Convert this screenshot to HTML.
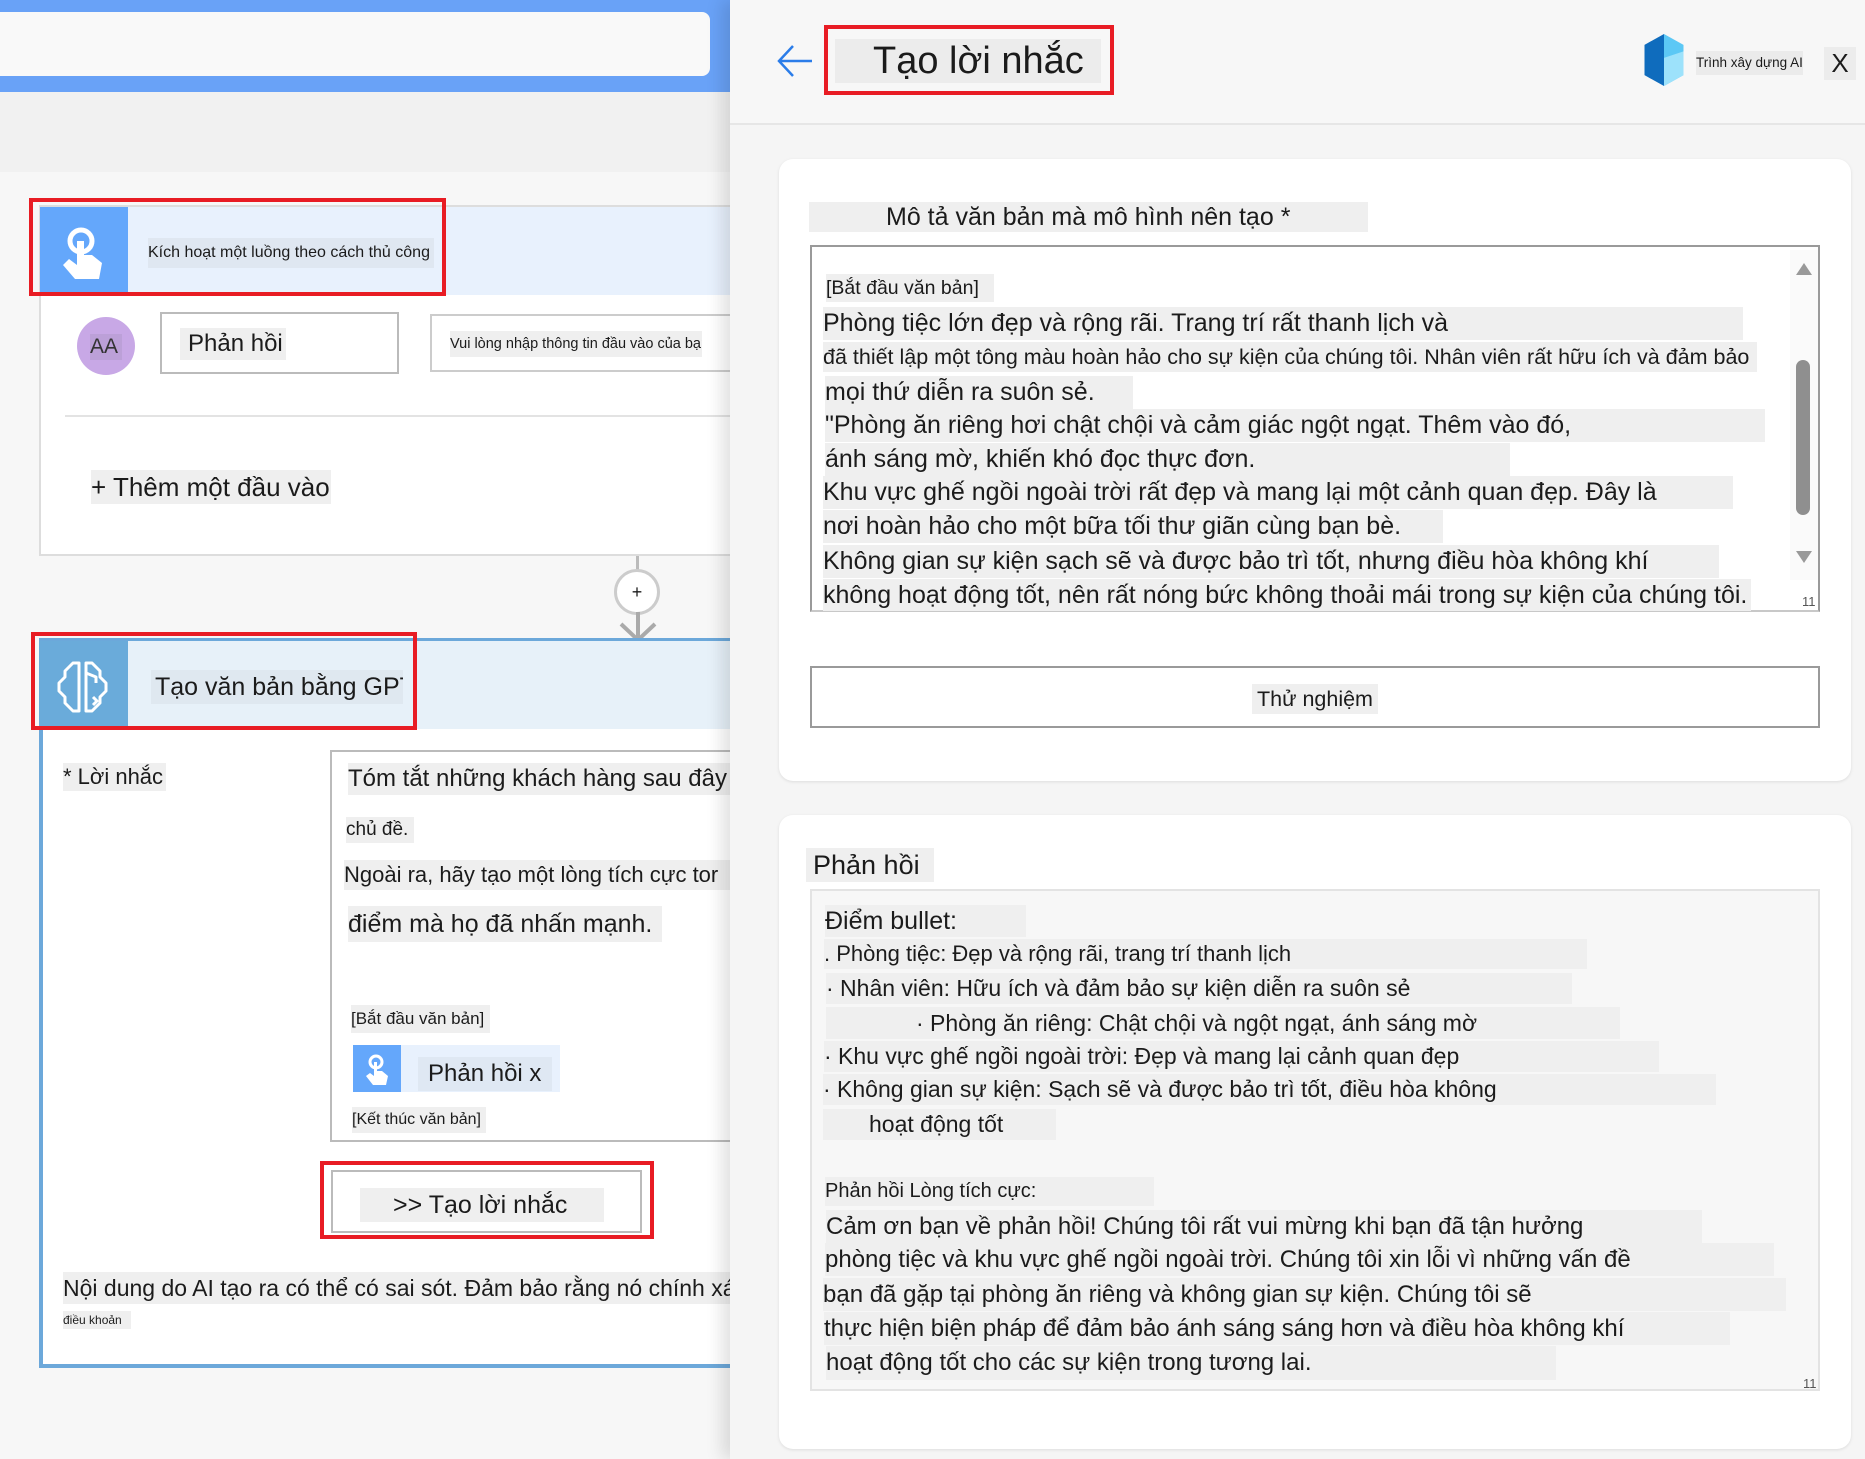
<!DOCTYPE html>
<html><head><meta charset="utf-8">
<style>
*{margin:0;padding:0;box-sizing:border-box}
body{width:1865px;height:1459px;overflow:hidden;background:#f7f7f7;font-family:"Liberation Sans","DejaVu Sans",sans-serif;color:#1b1b1b;position:relative}
.a{position:absolute}
.t{position:absolute;white-space:nowrap;background:#efefef;overflow:hidden}
.rb{position:absolute;border:4px solid #e81c24}
</style></head><body>

<!-- LEFT -->
<div class="a" style="left:0;top:0;width:730px;height:92px;background:#69a2f7"></div>
<div class="a" style="left:0;top:12px;width:710px;height:64px;background:#f9f9f9;border-radius:0 8px 8px 0"></div>
<div class="a" style="left:0;top:92px;width:730px;height:80px;background:#f1f1f1"></div>

<!-- trigger card -->
<div class="a" style="left:39px;top:205px;width:691px;height:351px;background:#fff;border:2px solid #ddd;border-right:none"></div>
<div class="a" style="left:40px;top:207px;width:690px;height:88px;background:#e8f1fd"></div>
<div class="a" style="left:40px;top:207px;width:88px;height:88px;background:#64a7fb">
<svg width="88" height="88" viewBox="0 0 88 88"><circle cx="41" cy="34" r="11" fill="none" stroke="#fff" stroke-width="5"/><path d="M37 34v24l-8-6-6 6 12 14h24l3-16-10-8h-8V34z" fill="#fff"/></svg></div>
<div class="t" style="left:148px;top:238px;width:286px;height:30px;line-height:30px;font-size:16px;background:#dfe7f1">Kích hoạt một luồng theo cách thủ công</div>
<div class="rb" style="left:29px;top:198px;width:417px;height:98px"></div>
<div class="a" style="left:77px;top:317px;width:58px;height:58px;border-radius:50%;background:#c8a8e6"></div>
<div class="t" style="left:90px;top:334px;width:32px;height:26px;line-height:26px;font-size:21px;background:#bca0d8;color:#333">AA</div>
<div class="a" style="left:160px;top:312px;width:239px;height:62px;border:2px solid #bbb;background:#fff"></div>
<div class="t" style="left:180px;top:328px;width:106px;height:32px;line-height:32px;font-size:24px;padding-left:8px">Phản hồi</div>
<div class="a" style="left:430px;top:314px;width:300px;height:58px;border:2px solid #ccc;border-right:none;background:#fff"></div>
<div class="t" style="left:450px;top:331px;width:252px;height:26px;line-height:26px;font-size:14.5px">Vui lòng nhập thông tin đầu vào của bạn</div>
<div class="a" style="left:65px;top:415px;width:665px;height:2px;background:#e3e3e3"></div>
<div class="t" style="left:91px;top:470px;width:240px;height:34px;line-height:34px;font-size:26px">+ Thêm một đầu vào</div>

<!-- connector -->
<div class="a" style="left:636px;top:556px;width:3px;height:14px;background:#bbb"></div>
<div class="a" style="left:614px;top:569px;width:46px;height:46px;border-radius:50%;border:3px solid #ccc;background:#fff;text-align:center;line-height:40px;font-size:18px">+</div>
<svg class="a" style="left:617px;top:612px" width="42" height="30" viewBox="0 0 42 30"><path d="M21 0v26M4 12l17 16 17-16" fill="none" stroke="#aaa" stroke-width="4"/></svg>

<!-- GPT card -->
<div class="a" style="left:39px;top:638px;width:691px;height:730px;background:#fff;border-left:4px solid #6ca8da;border-bottom:4px solid #6ca8da;border-top:3px solid #6ca8da"></div>
<div class="a" style="left:43px;top:641px;width:687px;height:88px;background:#e7f1f9"></div>
<div class="a" style="left:39px;top:641px;width:89px;height:88px;background:#6aabda">
<svg width="89" height="88" viewBox="0 0 89 88"><g fill="none" stroke="#fff" stroke-width="3" stroke-linejoin="round"><path d="M40 22h-6l-8 8v6l-6 6v8l6 6v6l8 8h6z"/><path d="M47 22h6l8 8v6l6 6v8l-6 6v6l-8 8h-6z"/><path d="M47 32l10 4v6"/><path d="M54 56l4 4-4 4"/></g></svg></div>
<div class="t" style="left:151px;top:670px;width:252px;height:34px;line-height:34px;font-size:25px;background:#dfe8f0;padding-left:4px">Tạo văn bản bằng GPT</div>
<div class="rb" style="left:31px;top:632px;width:386px;height:98px"></div>

<div class="t" style="left:63px;top:763px;width:103px;height:28px;line-height:28px;font-size:22px">* Lời nhắc</div>
<div class="a" style="left:330px;top:750px;width:400px;height:392px;border:2px solid #bbb;border-right:none;background:#fff"></div>
<div class="t" style="left:348px;top:763px;width:382px;height:32px;line-height:32px;font-size:24px">Tóm tắt những khách hàng sau đây t</div>
<div class="t" style="left:346px;top:817px;width:68px;height:26px;line-height:26px;font-size:19px">chủ đề.</div>
<div class="t" style="left:344px;top:860px;width:386px;height:30px;line-height:30px;font-size:22px">Ngoài ra, hãy tạo một lòng tích cực tor</div>
<div class="t" style="left:348px;top:906px;width:314px;height:36px;line-height:36px;font-size:25px">điểm mà họ đã nhấn mạnh.</div>
<div class="t" style="left:351px;top:1005px;width:139px;height:28px;line-height:28px;font-size:17px">[Bắt đầu văn bản]</div>
<div class="a" style="left:353px;top:1045px;width:207px;height:47px;background:#e8f1fd"></div>
<div class="a" style="left:353px;top:1045px;width:48px;height:47px;background:#64a7fb">
<svg width="48" height="47" viewBox="0 0 48 47"><circle cx="23" cy="17" r="6" fill="none" stroke="#fff" stroke-width="3"/><path d="M21 17v14l-4-3-4 3 7 9h13l2-9-6-5h-5V17z" fill="#fff"/></svg></div>
<div class="t" style="left:418px;top:1057px;width:134px;height:34px;line-height:34px;font-size:24px;background:#dfe8f3;padding-left:10px">Phản hồi x</div>
<div class="t" style="left:352px;top:1107px;width:134px;height:26px;line-height:26px;font-size:16px">[Kết thúc văn bản]</div>

<div class="a" style="left:331px;top:1170px;width:311px;height:63px;border:2px solid #bbb;background:#fff"></div>
<div class="t" style="left:360px;top:1188px;width:244px;height:34px;line-height:34px;font-size:25px;padding-left:33px">&gt;&gt; Tạo lời nhắc</div>
<div class="rb" style="left:320px;top:1161px;width:334px;height:78px"></div>

<div class="t" style="left:63px;top:1272px;width:667px;height:32px;line-height:32px;font-size:23px">Nội dung do AI tạo ra có thể có sai sót. Đảm bảo rằng nó chính xác</div>
<div class="t" style="left:63px;top:1311px;width:68px;height:18px;line-height:18px;font-size:12px">điều khoản</div>

<!-- RIGHT PANEL -->
<div class="a" style="left:730px;top:0;width:1135px;height:1459px;background:#f5f5f5;box-shadow:-8px 0 16px rgba(0,0,0,0.12)"></div>
<div class="a" style="left:730px;top:0;width:1135px;height:125px;background:#f7f7f7;border-bottom:2px solid #e6e6e6"></div>
<svg class="a" style="left:776px;top:44px" width="38" height="34" viewBox="0 0 38 34"><path d="M36 17H3M17 2L3 17l14 15" fill="none" stroke="#2b7de9" stroke-width="2.5"/></svg>
<div class="t" style="left:835px;top:39px;width:266px;height:44px;line-height:44px;font-size:38px;background:#ececec;padding-left:38px">Tạo lời nhắc</div>
<div class="rb" style="left:824px;top:25px;width:290px;height:70px"></div>
<svg class="a" style="left:1638px;top:34px" width="52" height="52" viewBox="0 0 48 48"><path d="M24 0L6 10v28l18 10z" fill="#0f6cbd"/><path d="M24 0l18 10v28L24 48z" fill="#5cc8f5"/><path d="M24 22l18-6v22L24 48z" fill="#9de2fb"/></svg>
<div class="t" style="left:1696px;top:51px;width:107px;height:24px;line-height:24px;font-size:13.5px;background:#ebebeb">Trình xây dựng AI</div>
<div class="t" style="left:1824px;top:47px;width:32px;height:33px;line-height:33px;font-size:26px;background:#ececec;text-align:center">X</div>

<!-- card 1 -->
<div class="a" style="left:779px;top:159px;width:1072px;height:622px;background:#fff;border-radius:14px;box-shadow:0 1px 3px rgba(0,0,0,0.1)"></div>
<div class="t" style="left:809px;top:202px;width:559px;height:30px;line-height:30px;font-size:25px;padding-left:77px">Mô tả văn bản mà mô hình nên tạo *</div>
<div class="a" style="left:810px;top:245px;width:1010px;height:367px;border:2px solid #9a9a9a;border-bottom-color:#c8c8c8;background:#fff;overflow:hidden"></div>
<div class="t" style="left:826px;top:274px;width:168px;height:28px;line-height:28px;font-size:19.5px">[Bắt đầu văn bản]</div>
<div class="t" style="left:823px;top:307px;width:920px;height:33px;line-height:33px;font-size:25px">Phòng tiệc lớn đẹp và rộng rãi. Trang trí rất thanh lịch và</div>
<div class="t" style="left:823px;top:342px;width:934px;height:30px;line-height:30px;font-size:21.5px">đã thiết lập một tông màu hoàn hảo cho sự kiện của chúng tôi. Nhân viên rất hữu ích và đảm bảo</div>
<div class="t" style="left:825px;top:376px;width:308px;height:33px;line-height:33px;font-size:25px">mọi thứ diễn ra suôn sẻ.</div>
<div class="t" style="left:825px;top:409px;width:940px;height:33px;line-height:33px;font-size:25px">"Phòng ăn riêng hơi chật chội và cảm giác ngột ngạt. Thêm vào đó,</div>
<div class="t" style="left:825px;top:443px;width:685px;height:33px;line-height:33px;font-size:25px">ánh sáng mờ, khiến khó đọc thực đơn.</div>
<div class="t" style="left:823px;top:476px;width:910px;height:33px;line-height:33px;font-size:25px">Khu vực ghế ngồi ngoài trời rất đẹp và mang lại một cảnh quan đẹp. Đây là</div>
<div class="t" style="left:823px;top:510px;width:620px;height:33px;line-height:33px;font-size:25px">nơi hoàn hảo cho một bữa tối thư giãn cùng bạn bè.</div>
<div class="t" style="left:823px;top:545px;width:896px;height:33px;line-height:33px;font-size:25px">Không gian sự kiện sạch sẽ và được bảo trì tốt, nhưng điều hòa không khí</div>
<div class="t" style="left:823px;top:579px;width:928px;height:32px;line-height:33px;font-size:25px">không hoạt động tốt, nên rất nóng bức không thoải mái trong sự kiện của chúng tôi.</div>
<div class="a" style="left:1790px;top:250px;width:28px;height:330px;background:#fafafa"></div>
<svg class="a" style="left:1795px;top:262px" width="18" height="14" viewBox="0 0 18 14"><path d="M9 1L17 13H1z" fill="#999"/></svg>
<div class="a" style="left:1796px;top:360px;width:14px;height:155px;border-radius:7px;background:#8f8f8f"></div>
<svg class="a" style="left:1795px;top:550px" width="18" height="14" viewBox="0 0 18 14"><path d="M1 1h16L9 13z" fill="#999"/></svg>
<div class="a" style="left:1802px;top:594px;font-size:13px;color:#555">11</div>

<div class="a" style="left:810px;top:666px;width:1010px;height:62px;border:2px solid #9a9a9a;background:#fff"></div>
<div class="t" style="left:1252px;top:684px;width:126px;height:30px;line-height:30px;font-size:21.5px;text-align:center">Thử nghiệm</div>

<!-- card 2 -->
<div class="a" style="left:779px;top:815px;width:1072px;height:634px;background:#fff;border-radius:14px;box-shadow:0 1px 3px rgba(0,0,0,0.1)"></div>
<div class="t" style="left:806px;top:848px;width:128px;height:34px;line-height:34px;font-size:27px;padding-left:7px">Phản hồi</div>
<div class="a" style="left:810px;top:889px;width:1010px;height:502px;border:2px solid #e3e3e3;background:#f7f7f7"></div>
<div class="t" style="left:825px;top:905px;width:201px;height:32px;line-height:32px;font-size:25px">Điểm bullet:</div>
<div class="t" style="left:824px;top:939px;width:763px;height:30px;line-height:30px;font-size:22px">. Phòng tiệc: Đẹp và rộng rãi, trang trí thanh lịch</div>
<div class="t" style="left:826px;top:973px;width:746px;height:31px;line-height:31px;font-size:23px">· Nhân viên: Hữu ích và đảm bảo sự kiện diễn ra suôn sẻ</div>
<div class="t" style="left:826px;top:1007px;width:794px;height:32px;line-height:32px;font-size:23px;padding-left:90px">· Phòng ăn riêng: Chật chội và ngột ngạt, ánh sáng mờ</div>
<div class="t" style="left:824px;top:1041px;width:835px;height:31px;line-height:31px;font-size:23px">· Khu vực ghế ngồi ngoài trời: Đẹp và mang lại cảnh quan đẹp</div>
<div class="t" style="left:823px;top:1074px;width:893px;height:31px;line-height:31px;font-size:23px">· Không gian sự kiện: Sạch sẽ và được bảo trì tốt, điều hòa không</div>
<div class="t" style="left:823px;top:1109px;width:233px;height:31px;line-height:31px;font-size:23px;padding-left:46px">hoạt động tốt</div>
<div class="t" style="left:825px;top:1177px;width:329px;height:29px;line-height:29px;font-size:20px">Phản hồi Lòng tích cực:</div>
<div class="t" style="left:826px;top:1210px;width:876px;height:33px;line-height:33px;font-size:24px">Cảm ơn bạn về phản hồi! Chúng tôi rất vui mừng khi bạn đã tận hưởng</div>
<div class="t" style="left:825px;top:1243px;width:949px;height:33px;line-height:33px;font-size:24px">phòng tiệc và khu vực ghế ngồi ngoài trời. Chúng tôi xin lỗi vì những vấn đề</div>
<div class="t" style="left:823px;top:1278px;width:963px;height:33px;line-height:33px;font-size:24px">bạn đã gặp tại phòng ăn riêng và không gian sự kiện. Chúng tôi sẽ</div>
<div class="t" style="left:824px;top:1312px;width:906px;height:33px;line-height:33px;font-size:24px">thực hiện biện pháp để đảm bảo ánh sáng sáng hơn và điều hòa không khí</div>
<div class="t" style="left:826px;top:1346px;width:730px;height:34px;line-height:34px;font-size:24px">hoạt động tốt cho các sự kiện trong tương lai.</div>
<div class="a" style="left:1803px;top:1376px;font-size:13px;color:#555">11</div>
</body></html>
